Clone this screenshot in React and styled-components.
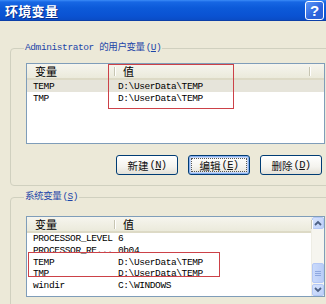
import styled, { createGlobalStyle } from "styled-components"

const GlobalStyle = createGlobalStyle`
  html, body { margin: 0; padding: 0; overflow: hidden; background: #ECE9D8; }
  * { box-sizing: border-box; }
`

const MONO = `"Liberation Mono", "Noto Sans CJK SC", monospace`
const CJK = `"Noto Sans CJK SC", "Liberation Sans", sans-serif`

const userRows = [
  { name: "TEMP", value: "D:\\UserData\\TEMP", selected: true },
  { name: "TMP", value: "D:\\UserData\\TEMP" },
]

const sysRows = [
  { name: "PROCESSOR_LEVEL", value: "6" },
  { name: "PROCESSOR_RE...", value: "0b04" },
  { name: "TEMP", value: "D:\\UserData\\TEMP" },
  { name: "TMP", value: "D:\\UserData\\TEMP" },
  { name: "windir", value: "C:\\WINDOWS" },
]

const Btn = ({ label, keyChar, focused }) => (
  <Button $focused={focused}>
    {label}<Accel>(<u>{keyChar}</u>)</Accel>
  </Button>
)

const ListHeader = ({ c2, rest }) => (
  <Header>
    <HeadCell $w={88}>变量</HeadCell>
    <HeadCell $w={c2}>值</HeadCell>
    {rest && <HeadCell $w={rest} />}
  </Header>
)

export default function App() {
  return (
    <Window>
      <GlobalStyle />
      <TitleBar>
        <Title>环境变量</Title>
        <HelpButton>?</HelpButton>
      </TitleBar>
      <Content>
        <Group>
          <Legend>Administrator 的用户变量<Accel>(<u>U</u>)</Accel></Legend>
          <ListBox $top={9}>
            <ListMain>
              <ListHeader c2={195} rest={20} />
              {userRows.map((r) => (
                <Row key={r.name} $h={12} $selected={r.selected}>
                  <NameCell>{r.name}</NameCell>
                  <ValueCell>{r.value}</ValueCell>
                </Row>
              ))}
            </ListMain>
          </ListBox>
          <ButtonRow>
            <Btn label="新建" keyChar="N" />
            <Btn label="编辑" keyChar="E" focused />
            <Btn label="删除" keyChar="D" />
          </ButtonRow>
        </Group>
        <Group $second>
          <Legend>系统变量<Accel>(<u>S</u>)</Accel></Legend>
          <ListBox $top={13}>
            <ListMain>
              <ListHeader c2={197} />
              {sysRows.map((r) => (
                <Row key={r.name} $h={11.7}>
                  <NameCell>{r.name}</NameCell>
                  <ValueCell>{r.value}</ValueCell>
                </Row>
              ))}
            </ListMain>
            <ScrollBar>
              <ScrollBtn>
                <svg width="8" height="6" viewBox="0 0 8 6">
                  <path d="M1 5 L4 2 L7 5" stroke="#4D6185" strokeWidth="1.8" fill="none" />
                </svg>
              </ScrollBtn>
              <Track>
                <Thumb>
                  <Grip />
                  <Grip />
                  <Grip />
                </Thumb>
              </Track>
              <ScrollBtn>
                <svg width="8" height="6" viewBox="0 0 8 6">
                  <path d="M1 1 L4 4 L7 1" stroke="#4D6185" strokeWidth="1.8" fill="none" />
                </svg>
              </ScrollBtn>
            </ScrollBar>
          </ListBox>
        </Group>
      </Content>
      <Mark $x={108} $y={64} $w={126} $h={45} />
      <Mark $x={28} $y={252} $w={192} $h={25} />
    </Window>
  )
}

const Window = styled.div`
  position: relative;
  width: 326px;
  height: 304px;
  overflow: hidden;
  background: #ECE9D8;
`

const TitleBar = styled.div`
  height: 21px;
  width: 100%;
  display: flex;
  align-items: center;
  justify-content: space-between;
  padding: 0 2px 0 5px;
  background: linear-gradient(#3b8cf7 0px, #1767e4 2px, #0c5ad9 40%, #0a52d2 80%, #0a4cc6 100%);
  border-bottom: 1px solid #0c3fa8;
`

const Title = styled.div`
  color: #fff;
  font-family: ${CJK};
  font-size: 13px;
  font-weight: bold;
  letter-spacing: 0.3px;
  text-shadow: 1px 1px 0 #0a2f8a;
`

const HelpButton = styled.div`
  width: 19px;
  height: 19px;
  border: 1px solid #fff;
  border-radius: 3px;
  background: linear-gradient(135deg, #5d97f8, #2b63dc 60%, #2a5fd3);
  color: #fff;
  font-family: "Liberation Sans", sans-serif;
  font-weight: bold;
  font-size: 15px;
  display: flex;
  align-items: center;
  justify-content: center;
`

const Content = styled.div`
  width: 340px;
  padding: 0 0 0 10px;
`

const Group = styled.fieldset`
  margin: ${(p) => (p.$second ? "5px" : "21px")} 0 0 0;
  padding: 0 0 ${(p) => (p.$second ? "20px" : "10px")} 15px;
  border: 1px solid #D0D0BF;
  border-radius: 4px;
  width: 330px;
  min-width: 0;
`

const Legend = styled.legend`
  margin-left: -2px;
  padding: 0 1px;
  height: 12px;
  line-height: 12px;
  font-family: ${MONO};
  font-size: 9.5px;
  letter-spacing: -0.4px;
  color: #1D45A8;
  white-space: nowrap;
`

const Accel = styled.span`
  font-family: ${MONO};
  letter-spacing: -0.6px;
  margin-left: 1px;
`

const ListBox = styled.div`
  margin-top: ${(p) => p.$top}px;
  width: 299px;
  height: 81px;
  border: 1px solid #7F9DB9;
  background: #fff;
  display: flex;
  overflow: hidden;
`

const ListMain = styled.div`
  flex: 1;
  display: flex;
  flex-direction: column;
  min-width: 0;
`

const Header = styled.div`
  height: 16px;
  display: flex;
  flex-shrink: 0;
  background: linear-gradient(#f6f5ee, #EBEADB);
  border-bottom: 2px solid #DDDAC6;
`

const HeadCell = styled.div`
  position: relative;
  width: ${(p) => p.$w}px;
  flex-shrink: 0;
  padding-left: 8px;
  font-family: ${CJK};
  font-size: 11px;
  line-height: 14px;
  color: #000;
  &::after {
    content: "";
    position: absolute;
    right: 0;
    top: 3px;
    bottom: 2px;
    width: 1px;
    background: #C7C5B2;
    box-shadow: 1px 0 0 #fff;
  }
`

const Row = styled.div`
  height: ${(p) => p.$h}px;
  display: flex;
  align-items: center;
  background: ${(p) => (p.$selected ? "#E6E4DA" : "transparent")};
  font-family: ${MONO};
  font-size: 9.5px;
  letter-spacing: -0.4px;
  color: #000;
  white-space: nowrap;
`

const NameCell = styled.div`
  width: 88px;
  flex-shrink: 0;
  padding-left: 6px;
  overflow: hidden;
`

const ValueCell = styled.div`
  padding-left: 3px;
`

const ButtonRow = styled.div`
  display: flex;
  justify-content: flex-end;
  gap: 10px;
  width: 299px;
  padding-right: 3px;
  margin-top: 11px;
`

const Button = styled.div`
  width: 62px;
  height: 20px;
  border: 1px solid #003C74;
  border-radius: 3px;
  background: linear-gradient(#fff, #f4f3ee 60%, #e3e1d7);
  display: flex;
  align-items: center;
  justify-content: center;
  font-family: ${CJK};
  font-size: 10.5px;
  color: #111;
  box-shadow: ${(p) =>
    p.$focused ? "inset 0 0 0 1px #8AB0EE, inset 0 0 0 2px #C6D8F7" : "none"};
  outline: ${(p) => (p.$focused ? "1px dotted #555" : "none")};
  outline-offset: -4px;
`

const ScrollBar = styled.div`
  width: 13px;
  flex-shrink: 0;
  display: flex;
  flex-direction: column;
  background: #F6F5EF;
  border-left: 1px solid #EEEDE5;
`

const ScrollBtn = styled.div`
  height: 12px;
  border: 1px solid #B4C8F6;
  border-radius: 2px;
  background: linear-gradient(135deg, #D6E3FD, #BDD0F8);
  display: flex;
  align-items: center;
  justify-content: center;
`

const Track = styled.div`
  flex: 1;
  display: flex;
  flex-direction: column;
  justify-content: flex-end;
  padding-bottom: 1px;
`

const Thumb = styled.div`
  height: 20px;
  border: 1px solid #B4C8F6;
  border-radius: 2px;
  background: linear-gradient(90deg, #CADAFB, #BACDF7);
  display: flex;
  flex-direction: column;
  align-items: center;
  justify-content: center;
  gap: 1px;
`

const Grip = styled.div`
  width: 6px;
  height: 1px;
  background: #8EA8E0;
`

const Mark = styled.div`
  position: absolute;
  left: ${(p) => p.$x}px;
  top: ${(p) => p.$y}px;
  width: ${(p) => p.$w}px;
  height: ${(p) => p.$h}px;
  border: 1.5px solid #CC4148;
  pointer-events: none;
`
